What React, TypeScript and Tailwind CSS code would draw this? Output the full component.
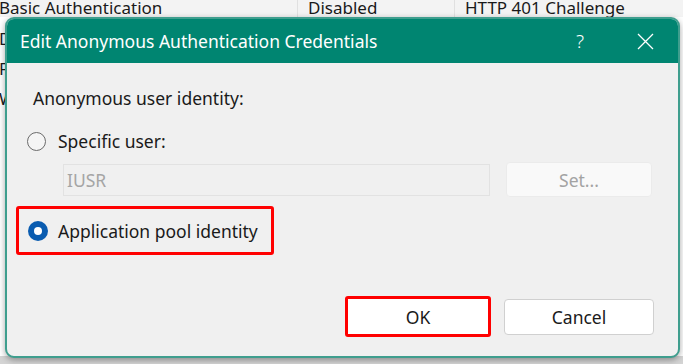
import React from 'react';

const font = { fontFamily: '"Noto Sans", "Open Sans", sans-serif' };

const Radio: React.FC<{ checked?: boolean }> = ({ checked }) =>
    checked ? (
        <span className="shrink-0 w-[20px] h-[20px] rounded-full bg-[#0a5cb0] flex items-center justify-center">
            <span className="w-[8px] h-[8px] rounded-full bg-white" />
        </span>
    ) : (
        <span className="shrink-0 w-[19px] h-[19px] rounded-full border-[1.5px] border-[#6b6b6b] bg-[#f5f5f5]" />
    );

const App: React.FC = () => {
    return (
        <div className="relative w-[683px] h-[364px] overflow-hidden bg-[#d4d4d4] text-[#1a1a1a]" style={font}>
            {/* list behind the dialog */}
            <div className="absolute left-0 right-0 top-0 h-[356px] bg-white">
                <div className="flex h-[17px] bg-[#f3f3f3] text-[17px] leading-[16px]">
                    <div className="w-[299px] -ml-[1px] border-r border-[#e0e0e0]">Basic Authentication</div>
                    <div className="w-[157px] pl-[10px] border-r border-[#e0e0e0]">Disabled</div>
                    <div className="pl-[10px]">HTTP 401 Challenge</div>
                </div>
                <div className="flex flex-col text-[17px] leading-[17px] -ml-[1px] mt-[13px] gap-[13px]">
                    <span>D</span>
                    <span>F</span>
                    <span>W</span>
                </div>
            </div>

            {/* dialog */}
            <div className="absolute left-[5px] top-[17px] w-[675px] h-[341px] rounded-[9px] border-[2px] border-[#3f9e8e] bg-[#f0f0f0] shadow-[0_2px_6px_rgba(0,0,0,0.35)] flex flex-col overflow-hidden">
                <div className="h-[44px] shrink-0 bg-[#008571] flex items-center text-white">
                    <span className="ml-[13px] text-[17.5px] leading-[22px]">Edit Anonymous Authentication Credentials</span>
                    <span className="ml-auto text-[19px] font-light">?</span>
                    <svg className="ml-[53px] mr-[24px]" width="17" height="17" viewBox="0 0 17 17">
                        <path d="M1 1L16 16M16 1L1 16" stroke="white" strokeWidth="1.3" />
                    </svg>
                </div>

                <div className="flex-1 flex flex-col text-[17.5px] leading-[22px]">
                    <div className="mt-[24px] ml-[26px]">Anonymous user identity:</div>

                    <div className="mt-[21px] ml-[20px] flex items-center gap-[12px]">
                        <Radio />
                        <span>Specific user:</span>
                    </div>

                    <div className="mt-[10px] ml-[56px] h-[35px] flex items-center">
                        <div className="w-[427px] h-[32px] border border-[#e2e2e2] bg-[#f0f0f0] text-[#a5a5a5] flex items-center px-[3px]">IUSR</div>
                        <div className="ml-[16px] w-[146px] h-[35px] rounded-[4px] bg-[#f9f9f9] border border-[#ebebeb] text-[#a3a3a3] flex items-center justify-center">Set...</div>
                    </div>

                    <div className="mt-[9px] ml-[9px] w-[258px] h-[49px] border-[3px] border-[#ff0000] rounded-[3px] flex items-center gap-[10px] pl-[9px]">
                        <Radio checked />
                        <span>Application pool identity</span>
                    </div>

                    <div className="mt-auto mb-[19px] pr-[24px] flex justify-end items-center gap-[13px]">
                        <div className="w-[146px] h-[41px] border-[3px] border-[#ff0000] rounded-[3px] bg-white flex items-center justify-center">OK</div>
                        <div className="w-[150px] h-[36px] border border-[#d0d0d0] rounded-[4px] bg-white flex items-center justify-center">Cancel</div>
                    </div>
                </div>
            </div>
        </div>
    );
};

export default App;
